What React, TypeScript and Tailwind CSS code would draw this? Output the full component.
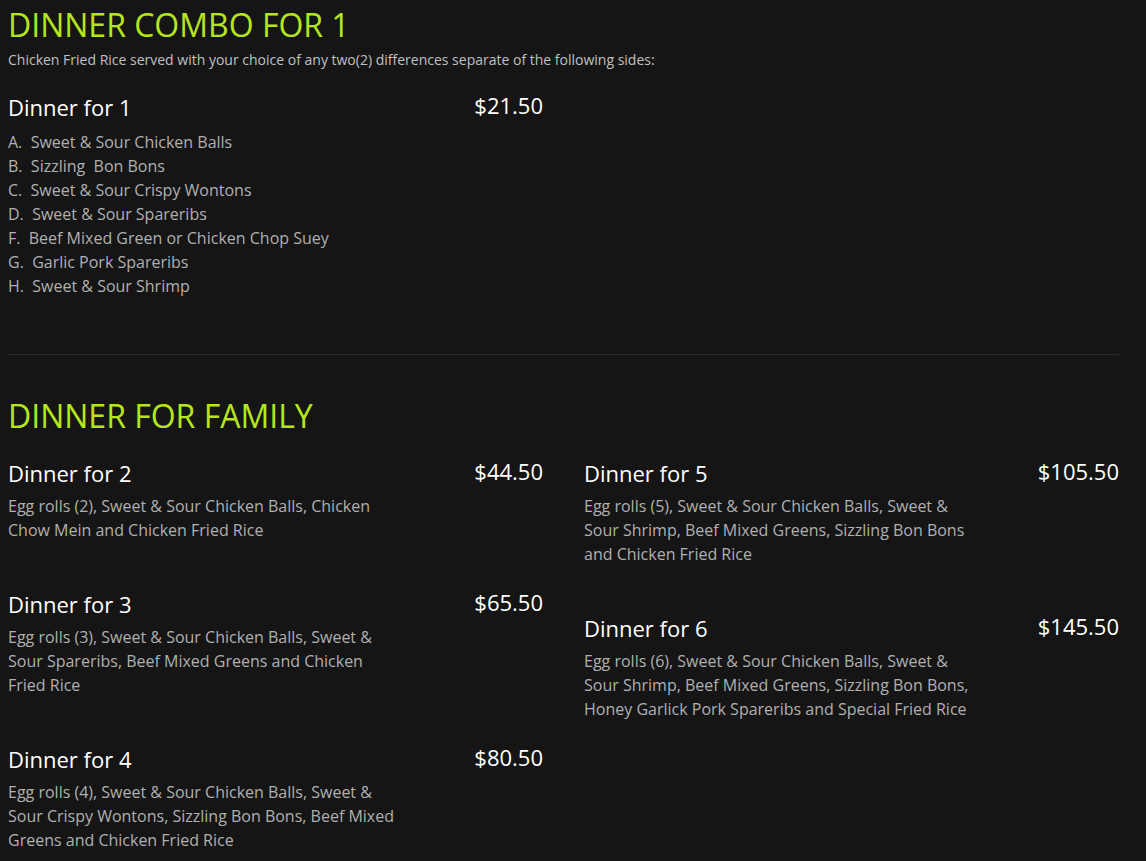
import React from "react";

interface MenuItem {
  name: string;
  price: string;
  desc: string;
}

const leftItems: MenuItem[] = [
  {
    name: "Dinner for 2",
    price: "$44.50",
    desc: "Egg rolls (2), Sweet & Sour Chicken Balls, Chicken Chow Mein and Chicken Fried Rice",
  },
  {
    name: "Dinner for 3",
    price: "$65.50",
    desc: "Egg rolls (3), Sweet & Sour Chicken Balls, Sweet & Sour Spareribs, Beef Mixed Greens and Chicken Fried Rice",
  },
  {
    name: "Dinner for 4",
    price: "$80.50",
    desc: "Egg rolls (4), Sweet & Sour Chicken Balls, Sweet & Sour Crispy Wontons, Sizzling Bon Bons, Beef Mixed Greens and Chicken Fried Rice",
  },
];

const rightItems: MenuItem[] = [
  {
    name: "Dinner for 5",
    price: "$105.50",
    desc: "Egg rolls (5), Sweet & Sour Chicken Balls, Sweet & Sour Shrimp, Beef Mixed Greens, Sizzling Bon Bons and Chicken Fried Rice",
  },
  {
    name: "Dinner for 6",
    price: "$145.50",
    desc: "Egg rolls (6), Sweet & Sour Chicken Balls, Sweet & Sour Shrimp, Beef Mixed Greens, Sizzling Bon Bons, Honey Garlick Pork Spareribs and Special Fried Rice",
  },
];

const sides = [
  "A.  Sweet & Sour Chicken Balls",
  "B.  Sizzling  Bon Bons",
  "C.  Sweet & Sour Crispy Wontons",
  "D.  Sweet & Sour Spareribs",
  "F.  Beef Mixed Green or Chicken Chop Suey",
  "G.  Garlic Pork Spareribs",
  "H.  Sweet & Sour Shrimp",
];

function ItemHeader({ name, price }: { name: string; price: string }) {
  return (
    <div className="flex items-start justify-between">
      <h3 className="text-[22px] leading-[30px] text-white">{name}</h3>
      <span className="text-[22px] leading-[26px] text-white">{price}</span>
    </div>
  );
}

function Item({ item }: { item: MenuItem }) {
  return (
    <div className="mb-[47px]">
      <ItemHeader name={item.name} price={item.price} />
      <p className="mt-[6px] w-[390px] text-[16px] leading-[24px] text-[#b0b0b0]">
        {item.desc}
      </p>
    </div>
  );
}

export default function App() {
  return (
    <div
      className="min-h-[861px] bg-[#151515] pl-2 pr-[27px]"
      style={{ fontFamily: '"Open Sans", sans-serif' }}
    >
      <section className="pt-[3px]">
        <h2 className="text-[32px] leading-[44px] text-[#b5e61d]">
          DINNER COMBO FOR 1
        </h2>
        <p className="mt-[3px] text-[14px] leading-[20px] text-[#c0c0c0]">
          Chicken Fried Rice served with your choice of any two(2) differences
          separate of the following sides:
        </p>
        <div className="mt-[22px] w-[535px]">
          <ItemHeader name="Dinner for 1" price="$21.50" />
          <ul className="mt-[8px] text-[16px] leading-[24px] text-[#b0b0b0]">
            {sides.map((s) => (
              <li key={s} className="whitespace-pre">
                {s}
              </li>
            ))}
          </ul>
        </div>
      </section>

      <hr className="mt-[56px] border-t border-[#2b2b2b]" />

      <section className="pt-[39px]">
        <h2 className="text-[32px] leading-[44px] text-[#b5e61d]">
          DINNER FOR FAMILY
        </h2>
        <div className="mt-[20px] grid grid-cols-2 gap-x-[41px]">
          <div>
            {leftItems.map((it) => (
              <Item key={it.name} item={it} />
            ))}
          </div>
          <div>
            {rightItems.map((it) => (
              <Item key={it.name} item={it} />
            ))}
          </div>
        </div>
      </section>
    </div>
  );
}
